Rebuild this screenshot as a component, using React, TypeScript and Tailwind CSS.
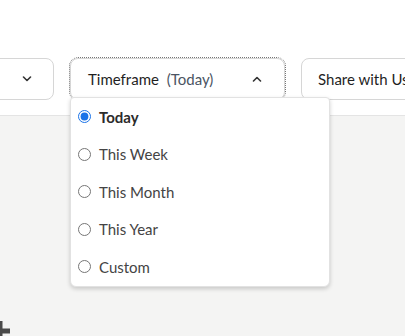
import React, { useState } from 'react';

const options = ['Today', 'This Week', 'This Month', 'This Year', 'Custom'];

const Chevron: React.FC<{ up?: boolean }> = ({ up }) => (
  <svg width="10" height="6" viewBox="0 0 10 6" fill="none" className="shrink-0">
    <path
      d={up ? 'M1.5 5L5 1.5L8.5 5' : 'M1.5 1L5 4.5L8.5 1'}
      stroke="#333"
      strokeWidth="1.6"
      strokeLinecap="round"
      strokeLinejoin="round"
    />
  </svg>
);

const App: React.FC = () => {
  const [selected, setSelected] = useState('Today');

  return (
    <div className="min-h-screen w-[405px] h-[336px] overflow-hidden bg-[#f4f4f3] font-['Lato','Noto_Sans',sans-serif]">
      <div className="h-[116px] bg-white border-b border-[#e4e4e4] pt-[58px]">
        <div className="flex gap-4 -ml-[50px]">
          <button className="w-[104px] h-[42px] shrink-0 flex items-center justify-end pr-[21px] border border-[#d6d6d6] rounded-lg bg-white">
            <Chevron />
          </button>

          <div className="relative shrink-0">
            <button className="w-[215px] h-[42px] flex items-center justify-between pl-[17px] pr-[22px] border border-[#d6d6d6] rounded-lg bg-white outline-1 outline-dotted outline-[#777] text-[15px]">
              <span className="text-[#1f1f1f]">
                Timeframe <span className="ml-1 text-[#4b5563]">(Today)</span>
              </span>
              <Chevron up />
            </button>

            <div className="absolute left-0 top-[39px] w-[260px] bg-white rounded-b-md rounded-t-sm border border-[#e2e2e2] shadow-[0_2px_4px_rgba(0,0,0,0.18)] z-10">
              {options.map((o) => (
                <label
                  key={o}
                  className="h-[37.5px] flex items-center gap-2 pl-[7px] cursor-pointer"
                >
                  <input
                    type="radio"
                    name="timeframe"
                    checked={selected === o}
                    onChange={() => setSelected(o)}
                    className="m-0 w-[13px] h-[13px] accent-[#1a73e8]"
                  />
                  <span
                    className={
                      selected === o
                        ? 'text-[15px] font-bold text-[#2b2b2b]'
                        : 'text-[15px] text-[#444]'
                    }
                  >
                    {o}
                  </span>
                </label>
              ))}
            </div>
          </div>

          <button className="w-[150px] h-[42px] shrink-0 flex items-center pl-[16px] border border-[#d6d6d6] rounded-lg bg-white text-[15px] text-[#1f1f1f] whitespace-nowrap">
            Share with Us
          </button>
        </div>
      </div>

      <div className="pt-[203px] -ml-[12px]">
        <svg width="24" height="24" viewBox="0 0 24 24">
          <path d="M12 2V22M2 12H22" stroke="#4a4a4a" strokeWidth="5" />
        </svg>
      </div>
    </div>
  );
};

export default App;
